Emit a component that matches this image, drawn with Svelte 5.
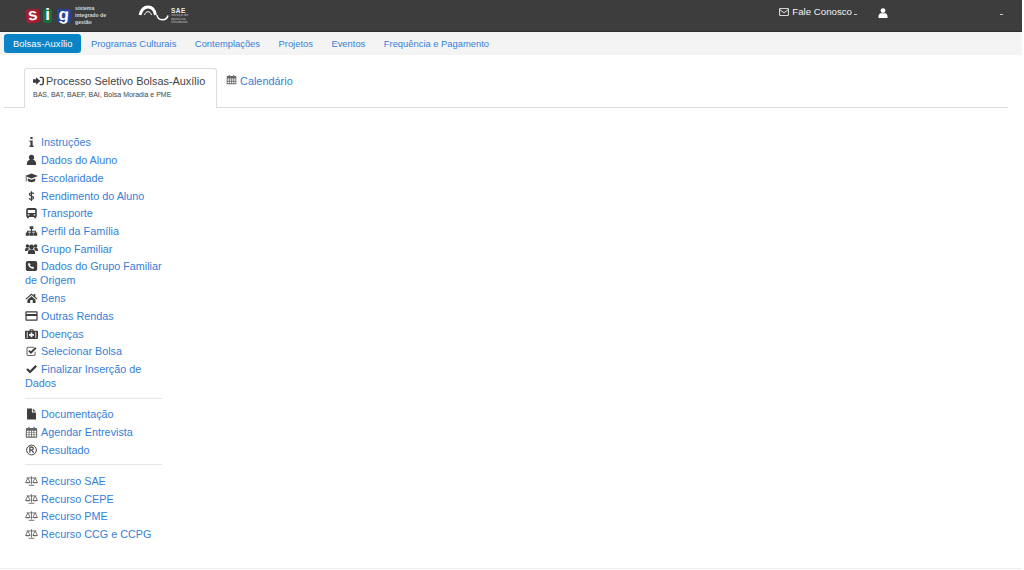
<script>
  const navItems = ["Programas Culturais", "Contemplações", "Projetos", "Eventos", "Frequência e Pagamento"];

  const groups = [
    [
      { label: "Instruções", icon: "info" },
      { label: "Dados do Aluno", icon: "user" },
      { label: "Escolaridade", icon: "grad" },
      { label: "Rendimento do Aluno", icon: "dollar" },
      { label: "Transporte", icon: "bus" },
      { label: "Perfil da Família", icon: "sitemap" },
      { label: "Grupo Familiar", icon: "users" },
      { label: "Dados do Grupo Familiar de Origem", icon: "phone" },
      { label: "Bens", icon: "home" },
      { label: "Outras Rendas", icon: "card" },
      { label: "Doenças", icon: "medkit" },
      { label: "Selecionar Bolsa", icon: "check-square" },
      { label: "Finalizar Inserção de Dados", icon: "check" },
    ],
    [
      { label: "Documentação", icon: "file" },
      { label: "Agendar Entrevista", icon: "calendar" },
      { label: "Resultado", icon: "registered" },
    ],
    [
      { label: "Recurso SAE", icon: "scale" },
      { label: "Recurso CEPE", icon: "scale" },
      { label: "Recurso PME", icon: "scale" },
      { label: "Recurso CCG e CCPG", icon: "scale" },
    ],
  ];

  const calendarPath = "M4 .5h1.500V2h5V.5H12V2h2c.5 0 1 .4 1 1v10c0 .6-.5 1-1 1H2c-.5 0-1-.4-1-1V3c0-.6.5-1 1-1h2zM2.300 5.500v1.700h2.200V5.500zM5.500 5.500v1.700h2V5.500zM8.500 5.500v1.700h2V5.500zM11.500 5.500v1.700h2.200V5.500zM2.300 8v1.700h2.200V8zM5.500 8v1.700h2V8zM8.500 8v1.700h2V8zM11.500 8v1.700h2.200V8zM2.300 10.500v2h2.200v-2zM5.500 10.500v2h2v-2zM8.500 10.500v2h2v-2zM11.500 10.500v2h2.200v-2z";
</script>

{#snippet glyph(name)}
  <svg class="ico" viewBox="0 0 16 14" aria-hidden="true">
    {#if name === "info"}
      <path fill="#3d3d3d" d="M6.600 .8h2.800v2.600H6.600zM5.600 5h3.800v6.200h1.100V13H5.600v-1.800h1.100V6.800H5.600z" />
    {:else if name === "user"}
      <circle cx="8" cy="3.800" r="3.200" fill="#3d3d3d" /><path fill="#3d3d3d" d="M2.400 13.200c-.4-3.800 1-5.800 3-6.200h5.200c2 .4 3.400 2.400 3 6.200z" />
    {:else if name === "grad"}
      <path fill="#3d3d3d" d="M0 4.500 8 1.500l8 3-8 3zM3.400 7.500 8 9.200l4.600-1.700v3c-2 2.400-7.200 2.400-9.200 0zM1 5.500v5.500h1V6z" />
    {:else if name === "dollar"}
      <path fill="none" stroke="#3d3d3d" stroke-width="1.500" d="M11 4.200C10 3 6 2.600 5.400 4.600c-.6 2.600 5.400 2 5.200 4.800-.2 2-4 2-5.600.6M8 1v12" />
    {:else if name === "bus"}
      <path fill="#3d3d3d" fill-rule="evenodd" d="M4 .8h8c1.500 0 2.500 1 2.500 2.400V11c0 .6-.4 1-1 1v1.500h-2.200V12H4.700v1.500H2.500V12c-.6 0-1-.4-1-1V3.200C1.500 1.800 2.500.8 4 .8zM3.500 3.200v3.800h9V3.200zM3.400 8.400v1.800h2V8.400zM10.600 8.400v1.800h2V8.400z" />
    {:else if name === "sitemap"}
      <path fill="#3d3d3d" d="M5.800 1h4.400v3.600H8.700v2h4.800v2.200H15v4h-4.400v-4h1.600V7.800H8.700v1H10.200v4H5.800v-4h1.500v-1H3.800v1h1.600v4H1v-4h1.500V6.600h4.800v-2H5.800z" />
    {:else if name === "users"}
      <circle cx="8" cy="4.500" r="3" fill="#3d3d3d" /><circle cx="3" cy="3.200" r="2.200" fill="#3d3d3d" /><circle cx="13" cy="3.200" r="2.200" fill="#3d3d3d" /><path fill="#3d3d3d" d="M3.600 13c-.3-3.400.8-5 2.600-5.300h3.600c1.800.3 2.900 1.900 2.600 5.300zM0 9.500c0-2.500.6-4 1.800-4.100h2.200c.3.900.7 1.400 1.300 1.900C3.900 7.800 3.100 8.500 2.800 9.500zM16 9.500c0-2.500-.6-4-1.800-4.100H12c-.3.900-.7 1.400-1.300 1.900 1.400.5 2.200 1.200 2.500 2.200z" />
    {:else if name === "phone"}
      <path fill="#3d3d3d" fill-rule="evenodd" d="M3.500 .8h9C13.900.8 15 1.800 15 3.300v7.400c0 1.500-1.100 2.500-2.500 2.500h-9C2.100 13.200 1 12.200 1 10.700V3.300C1 1.800 2.100.8 3.500.8zM5 3 3.800 4.200c0 3 3 6.200 6.200 6.200l1.400-1.300-2-1.500-.9.700C7.400 7.800 6.500 7 6 6l.8-1z" />
    {:else if name === "home"}
      <path fill="#3d3d3d" d="M8 1.500.6 7.800l.9 1L8 3.400l6.500 5.400.9-1-2.700-2.300V2h-2v1.900zM3 9l5-4.200L13 9v4H9.500V9.500h-3V13H3z" />
    {:else if name === "card"}
      <path fill="#3d3d3d" fill-rule="evenodd" d="M1.500 1.200h13c.6 0 1 .4 1 1v9.600c0 .6-.4 1-1 1h-13c-.6 0-1-.4-1-1V2.200c0-.6.4-1 1-1zM2 2.800v1.800h12V2.800zM2 7v4.200h12V7z" />
    {:else if name === "medkit"}
      <path fill="#3d3d3d" fill-rule="evenodd" d="M5.500 3V1.800c0-.4.4-.8.8-.8h3.400c.4 0 .8.400.8.800V3H15c.6 0 1 .4 1 1v8c0 .6-.4 1-1 1H1c-.6 0-1-.4-1-1V4c0-.6.4-1 1-1zM6.800 2.300V3h2.400v-.7zM2.200 4.200v7.600h1V4.200zM12.800 4.200v7.600h1V4.200zM7 5v2H5v2h2v2h2V9h2V7H9V5z" />
    {:else if name === "check-square"}
      <path fill="none" stroke="#666" stroke-width="1.300" d="M12.500 8v3c0 1-.6 1.500-1.500 1.500H4c-1 0-1.500-.5-1.500-1.500V4c0-1 .5-1.500 1.500-1.500h7" />
      <path fill="none" stroke="#3d3d3d" stroke-width="2.200" d="m4.800 6.500 2.500 2.500 6-6" />
    {:else if name === "check"}
      <path fill="none" stroke="#3d3d3d" stroke-width="2.800" d="m2.500 7 3.700 3.700 7.500-7.500" />
    {:else if name === "file"}
      <path fill="#3d3d3d" d="M2.500.3h6v4.700H13.500v8.700h-11zM9.700.6l3.500 3.300H9.700z" />
    {:else if name === "calendar"}
      <path fill="#666" fill-rule="evenodd" d={calendarPath} />
    {:else if name === "registered"}
      <circle cx="8" cy="7" r="6" fill="none" stroke="#3d3d3d" stroke-width="1.200" />
      <path fill="none" stroke="#3d3d3d" stroke-width="1.400" d="M6 10.500v-7h2.400c2.400 0 2.400 3.600 0 3.600H6M8.500 7.100l2 3.400" />
    {:else if name === "scale"}
      <path fill="none" stroke="#666" stroke-width="1.100" d="M2 3.200h12M3.500 3.200.8 8.500M3.500 3.200l2.700 5.300M12.500 3.200l-2.700 5.300M12.500 3.200l2.700 5.300M8 1.200v10M4.500 12.300h7" />
      <path fill="#666" d="M0 8.300h7c-.4 2.100-6.600 2.100-7 0zM9 8.300h7c-.4 2.100-6.600 2.100-7 0z" />
    {/if}
  </svg>
{/snippet}

<div class="page">
  <header class="topbar">
    <div class="brand">
      <div class="sig">
        <span class="tile red">s</span><span class="tile green">i</span><span class="tile blue">g</span>
      </div>
      <div class="sig-text">sistema<br />integrado de<br />gestão</div>
      <div class="sae">
        <svg width="34" height="18" viewBox="0 0 34 18" aria-hidden="true">
          <path fill="none" stroke="#fff" stroke-width="2.800" d="M2 10C3.500 4.500 6.500 2 10 2s6.500 2.500 7.500 8" />
          <path fill="none" stroke="#fff" stroke-width="1" d="M6.500 10c1-2.500 2-3.300 3.500-3.300s2.500.8 3.500 3.300" />
          <path fill="none" stroke="#fff" stroke-width="1.500" d="M19 10c.8 6 9.500 6.500 11 .5" />
        </svg>
        <div class="sae-text"><b>SAE</b><span>serviço de<br />apoio ao<br />estudante</span></div>
      </div>
    </div>
    <div class="top-right">
      <svg width="10" height="8" viewBox="0 0 12 10" aria-hidden="true"><path fill="none" stroke="#fff" stroke-width="1.100" d="M1 .5h10c.3 0 .5.2.5.5v8c0 .3-.2.5-.5.5H1C.7 9.500.5 9.300.5 9V1C.5.700.7.500 1 .500zM.7 2 6 6l5.300-4" /></svg>
      <span class="contact">Fale Conosco</span><span class="caret"></span>
      <svg class="top-user" width="10" height="10" viewBox="0 0 10 10" aria-hidden="true"><circle cx="5" cy="2.600" r="2.400" fill="#fff" /><path fill="#fff" d="M.5 10c-.3-3 .7-4.500 2-4.800h5c1.300.3 2.300 1.800 2 4.800z" /></svg>
      <span class="caret far"></span>
    </div>
  </header>

  <nav class="mainnav">
    <a class="pill active" href="#top">Bolsas-Auxílio</a>
    {#each navItems as item}
      <a class="pill" href="#top">{item}</a>
    {/each}
  </nav>

  <div class="tabs">
    <div class="tab current">
      <div class="tab-title">
        <svg width="11" height="10" viewBox="0 0 13 11" aria-hidden="true"><path fill="#3d3d3d" d="M0 3.500h3.500V1L8.800 5.500 3.500 10V7.500H0zM8 .5h2.500c1.400 0 2.500 1 2.500 2.500v5c0 1.500-1.100 2.500-2.500 2.500H8V9h2.300c.6 0 1-.4 1-1V3c0-.6-.4-1-1-1H8z" /></svg>
        Processo Seletivo Bolsas-Auxílio
      </div>
      <div class="tab-sub">BAS, BAT, BAEF, BAI, Bolsa Moradia e PME</div>
    </div>
    <a class="tab link" href="#top">
      <svg width="11" height="11" viewBox="0 0 16 14" aria-hidden="true"><path fill="#666" fill-rule="evenodd" d={calendarPath} /></svg>
      Calendário
    </a>
  </div>

  <aside class="menu">
    {#each groups as group, i}
      {#if i > 0}<hr />{/if}
      <ul>
        {#each group as entry}
          <li>{@render glyph(entry.icon)}<a href="#top">{entry.label}</a></li>
        {/each}
      </ul>
    {/each}
  </aside>

  <div class="footer"></div>
</div>

<style>
  :global(body) {
    margin: 0;
    background: #fff;
  }
  .page {
    width: 1022px;
    height: 570px;
    font-family: "Liberation Sans", Arial, sans-serif;
    font-size: 10.5px;
    color: #333;
    position: relative;
    overflow: hidden;
  }
  a {
    color: #3480d8;
    text-decoration: none;
  }
  .topbar {
    height: 31px;
    background: #3d3d3d;
    border-bottom: 1px solid #2f2f2f;
    display: flex;
    justify-content: space-between;
  }
  .brand {
    display: flex;
    align-items: center;
    padding-left: 26px;
  }
  .sig {
    display: flex;
    align-items: center;
    width: 45px;
  }
  .tile {
    width: 14px;
    height: 14px;
    border-radius: 3px;
    display: flex;
    align-items: center;
    justify-content: center;
    font-weight: bold;
    font-size: 17px;
    line-height: 1;
    padding-bottom: 3px;
    box-sizing: border-box;
    color: #fff;
    transform: rotate(-5deg);
  }
  .red {
    background: #a81c30;
  }
  .green {
    background: #1c6f3c;
    width: 10px;
    margin: 0 5px 0 3px;
    transform: none;
  }
  .blue {
    background: #23459c;
    transform: rotate(4deg);
  }
  .sig-text {
    color: #d8d8d8;
    font-size: 5.200px;
    line-height: 7px;
    font-weight: bold;
    margin-left: 4px;
    width: 62px;
  }
  .sae {
    display: flex;
    align-items: center;
    margin-top: -3px;
    margin-left: 1px;
  }
  .sae-text {
    color: #eee;
    margin-left: -1px;
    margin-top: 4px;
    font-size: 3.800px;
    line-height: 3.800px;
  }
  .sae-text b {
    display: block;
    font-size: 6.500px;
    line-height: 7px;
    letter-spacing: 0.5px;
  }
  .sae-text span {
    display: block;
    color: #bbb;
  }
  .top-right {
    display: flex;
    align-items: flex-start;
    color: #fff;
    font-size: 9.700px;
    line-height: 12px;
    padding-top: 6px;
    margin-right: 19px;
  }
  .top-right svg {
    margin-top: 2px;
  }
  .contact {
    margin-left: 3px;
    color: #f2f2f2;
  }
  .caret {
    width: 3px;
    height: 1px;
    background: #ccc;
    margin: 8px 0 0 2px;
  }
  .top-right .top-user {
    margin: 2px 0 0 21px;
  }
  .caret.far {
    margin-left: 112px;
  }
  .mainnav {
    height: 23px;
    background: #f4f4f4;
    display: flex;
    align-items: center;
    padding-left: 4px;
    gap: 0.5px;
  }
  .pill {
    padding: 4px 9px;
    line-height: 11px;
    border-radius: 3px;
    font-size: 9.400px;
  }
  .pill.active {
    background: #0a84c6;
    color: #fff;
  }
  .tabs {
    margin: 13px 14px 0 4px;
    padding-left: 20px;
    height: 39px;
    border-bottom: 1px solid #ddd;
    display: flex;
  }
  .tab {
    padding: 6px 8px 0 10px;
    height: 39px;
    box-sizing: border-box;
    font-size: 10.900px;
  }
  .tab.link {
    padding-left: 9px;
  }
  .tab.current {
    width: 193px;
    height: 40px;
    background: #fff;
    border: 1px solid #ddd;
    border-bottom: 0;
    border-radius: 3px 3px 0 0;
    color: #444;
    padding-left: 8px;
  }
  .tab-title {
    line-height: 12px;
    white-space: nowrap;
    display: flex;
    align-items: center;
    gap: 2px;
  }
  .tab-sub {
    font-size: 7px;
    line-height: 9px;
    margin-top: 3px;
    white-space: nowrap;
  }
  .menu {
    width: 138px;
    margin: 27.400px 0 0 25px;
    font-size: 10.800px;
    line-height: 14px;
  }
  .menu ul {
    list-style: none;
    margin: 0;
    padding: 0;
  }
  .menu li {
    margin-bottom: 3.720px;
  }
  .ico {
    display: inline-block;
    width: 13px;
    height: 12px;
    margin-right: 3px;
    vertical-align: -2px;
  }
  hr {
    width: 137px;
    margin: 7.700px 0 8.500px;
    border: 0;
    border-top: 1px solid #e6e6e6;
  }
  .footer {
    position: absolute;
    left: 0;
    right: 0;
    bottom: 1px;
    border-top: 1px solid #eee;
  }
</style>
